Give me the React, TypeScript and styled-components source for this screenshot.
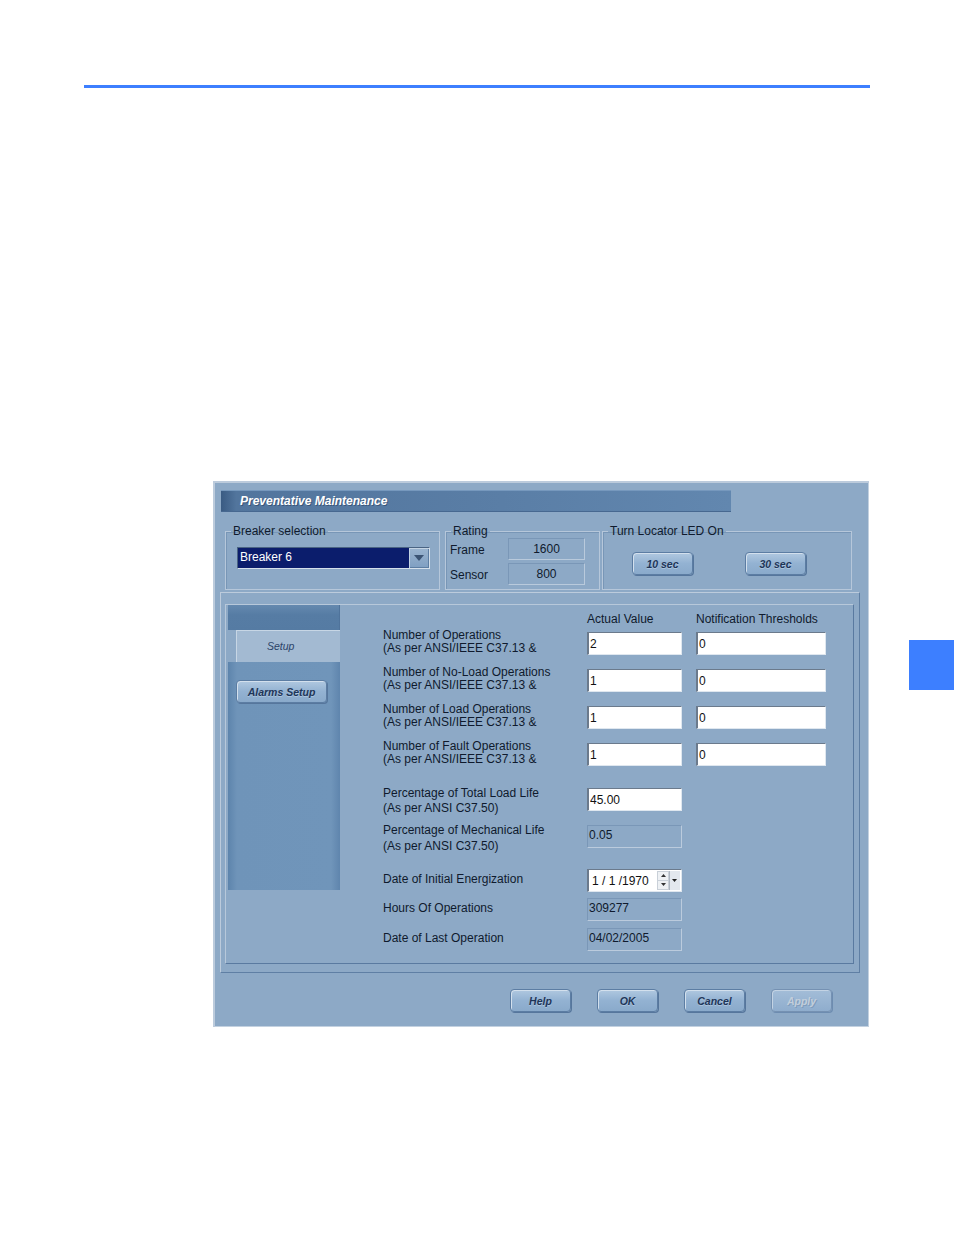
import React from 'react';
import styled, { createGlobalStyle } from 'styled-components';

const GlobalStyle = createGlobalStyle`
  html, body { margin: 0; padding: 0; background: #fff; }
  body { font-family: "Liberation Sans", Arial, sans-serif; }
`;

const Page = styled.div`
  width: 954px;
  height: 1235px;
  background: #fff;
  overflow: hidden;
`;

const Rule = styled.div`
  margin: 85px 0 0 84px;
  width: 786px;
  height: 3px;
  background: #3d7fff;
`;

const Row = styled.div`
  display: flex;
  align-items: flex-start;
  margin-top: 393px;
  padding-left: 213px;
`;

const ThumbTab = styled.div`
  margin: 159px 0 0 40px;
  width: 45px;
  height: 50px;
  background: #3d7fff;
`;

const Dialog = styled.div`
  width: 656px;
  height: 546px;
  box-sizing: border-box;
  padding: 9px 0 0 8px;
  background: #8da9c6;
  box-shadow: inset 2px 2px 0 #bccbdc, inset -1px -1px 0 #c3d1e0;
  font-size: 12px;
  color: #0f1a2d;
`;

const TitleBar = styled.div`
  width: 510px;
  height: 22px;
  box-sizing: border-box;
  padding-left: 19px;
  display: flex;
  align-items: center;
  background: linear-gradient(to right, #3a5b83 0, #52759d 3%, #5a7ea6 55%, #6287af 100%);
  box-shadow: inset 0 1px 0 #7698bd, inset 0 -1px 0 #476890;
  color: #fff;
  font-weight: bold;
  font-style: italic;
  font-size: 12px;
  text-shadow: 1px 1px 0 rgba(25, 45, 75, 0.45);
`;

const TopGroups = styled.div`
  display: flex;
  margin: 12px 0 0 4px;
`;

const Group = styled.fieldset<{ $w: number; $ml?: number }>`
  margin: 0 0 0 ${(p) => p.$ml ?? 0}px;
  width: ${(p) => p.$w}px;
  height: 66px;
  min-inline-size: 0;
  box-sizing: border-box;
  padding: 0;
  border: 1px solid #b6c7da;
  box-shadow: inset 1px 1px 0 #7896b6;
`;

const Legend = styled.legend`
  margin-left: 5px;
  padding: 0 2px;
  font-size: 12px;
  line-height: 14px;
  color: #0f1a2d;
`;

const Combo = styled.div`
  margin: 9px 0 0 11px;
  width: 193px;
  height: 22px;
  box-sizing: border-box;
  display: flex;
  border: 1px solid;
  border-color: #4a6483 #d5e0eb #d5e0eb #4a6483;
  background: #0b1d6c;
`;

const ComboText = styled.div`
  flex: 1;
  padding-left: 2px;
  line-height: 19px;
  color: #fff;
  font-size: 12px;
`;

const ComboButton = styled.div`
  width: 20px;
  display: flex;
  align-items: center;
  justify-content: center;
  background: linear-gradient(#9ab4cf, #7f9fc2);
  box-shadow: inset 1px 1px 0 #c3d3e3, inset -1px -1px 0 #5d7ea3;
`;

const RatingGrid = styled.div`
  margin-left: 4px;
  display: flex;
  flex-direction: column;
  gap: 3px;
`;

const RatingRow = styled.div`
  display: flex;
  align-items: center;
  height: 22px;
`;

const RatingLabel = styled.div`
  width: 58px;
  margin-top: 2px;
`;

const RatingValue = styled.div`
  width: 77px;
  height: 22px;
  box-sizing: border-box;
  display: flex;
  align-items: center;
  justify-content: center;
  border: 1px solid;
  border-color: #7a97b7 #b9cadc #b9cadc #7a97b7;
`;

const LedButtons = styled.div`
  display: flex;
  gap: 52px;
  margin: 14px 0 0 29px;
`;

const Btn = styled.button<{ $disabled?: boolean; $w?: number }>`
  width: ${(p) => p.$w ?? 61}px;
  height: 23px;
  box-sizing: border-box;
  padding: 0;
  border: 1px solid #5c7da3;
  border-radius: 4px;
  background: linear-gradient(#b0c8e0, #93b2d2 50%, #8aaacb);
  box-shadow: inset 1px 1px 0 #d3e0ed, 1px 1px 0 #56769c;
  font: italic bold 10.5px "Liberation Sans", Arial, sans-serif;
  color: ${(p) => (p.$disabled ? '#c2cedb' : '#1e3558')};
  text-shadow: ${(p) => (p.$disabled ? '1px 1px 0 #7f9cbc' : '0 1px 0 rgba(220,232,244,0.4)')};
  ${(p) =>
    p.$disabled
      ? 'background: linear-gradient(#a3bdd8, #8fadcd); border-color: #7591b2; box-shadow: inset 1px 1px 0 #c3d3e4, 1px 1px 0 #6d8cb0;'
      : ''}
`;

const MainOuter = styled.div`
  margin: 2px 0 0 -1px;
  width: 640px;
  height: 381px;
  box-sizing: border-box;
  padding: 11px 0 0 4px;
  border: 1px solid;
  border-color: #bccbdc #5f7fa4 #5f7fa4 #bccbdc;
`;

const MainInner = styled.div`
  width: 629px;
  height: 360px;
  box-sizing: border-box;
  padding-left: 2px;
  display: flex;
  align-items: flex-start;
  border: 1px solid;
  border-color: #b7c8da #5a7aa0 #5a7aa0 #b7c8da;
`;

const Nav = styled.div`
  width: 112px;
  height: 285px;
  display: flex;
  flex-direction: column;
`;

const NavStrip = styled.div`
  height: 25px;
  background: linear-gradient(#6589af, #567ca4 40%, #557ba3);
  box-shadow: inset -1px 0 0 #4f739b;
`;

const NavTabRow = styled.div`
  height: 32px;
  display: flex;
`;

const NavTab = styled.div`
  margin-left: 8px;
  flex: 1;
  padding-left: 31px;
  display: flex;
  align-items: center;
  background: #a3bad2;
  box-shadow: inset 1px 1px 0 #c7d6e5;
  font: italic 10.5px "Liberation Sans", Arial, sans-serif;
  color: #2b4368;
`;

const NavBody = styled.div`
  flex: 1;
  padding: 18px 0 0 8px;
  background: linear-gradient(to right, #5d84ac, #6f94b9 8%, #7095ba 92%, #5f85ad);
`;

const Form = styled.div`
  margin-left: 43px;
  padding-top: 7px;
  display: flex;
  flex-direction: column;
`;

const FormRow = styled.div<{ $mt: number; $h?: number }>`
  display: grid;
  grid-template-columns: 190px 95px 130px;
  grid-template-rows: ${(p) => p.$h ?? 23}px;
  column-gap: 14px;
  margin-top: ${(p) => p.$mt}px;
`;

const Head = styled.div`
  line-height: 14px;
  white-space: nowrap;
`;

const Label = styled.div<{ $lh?: number; $mt?: number }>`
  line-height: ${(p) => p.$lh ?? 13}px;
  margin-top: ${(p) => p.$mt ?? -3}px;
  white-space: nowrap;
`;

const SingleLabel = styled.div`
  align-self: center;
  line-height: 14px;
  margin-top: -4px;
  white-space: nowrap;
`;

const Field = styled.input`
  width: 100%;
  height: 23px;
  box-sizing: border-box;
  margin: 0;
  padding: 0 0 0 1px;
  border-style: solid;
  border-width: 1px 1px 1px 2px;
  border-color: #6b7a8c #dfe7ef #dfe7ef #6b7a8c;
  background: #fff;
  font: 12px "Liberation Sans", Arial, sans-serif;
  color: #111;
  outline: none;
`;

const ReadBox = styled.div`
  height: 23px;
  box-sizing: border-box;
  padding: 0 0 3px 1px;
  display: flex;
  align-items: center;
  border: 1px solid;
  border-color: #7a97b7 #bbcbdd #bbcbdd #7a97b7;
`;

const DateBox = styled.div`
  height: 23px;
  box-sizing: border-box;
  display: flex;
  align-items: center;
  border-style: solid;
  border-width: 1px 1px 1px 2px;
  border-color: #6b7a8c #dfe7ef #dfe7ef #6b7a8c;
  background: #fff;
`;

const DateText = styled.div`
  flex: 1;
  padding-left: 3px;
  font-size: 12px;
  color: #111;
  white-space: pre;
`;

const Spin = styled.div`
  width: 12px;
  height: 19px;
  display: flex;
  flex-direction: column;
  background: #eef1f4;
  box-shadow: inset 0 0 0 1px #c9d0d8;
`;

const SpinHalf = styled.div`
  flex: 1;
  display: flex;
  align-items: center;
  justify-content: center;
  border-bottom: 1px solid #c9d0d8;
`;

const DropBtn = styled.div`
  width: 11px;
  height: 19px;
  margin-right: 1px;
  display: flex;
  align-items: center;
  justify-content: center;
  background: #e3e8ee;
  box-shadow: inset 1px 0 0 #aeb7c2;
`;

const ButtonBar = styled.div`
  display: flex;
  justify-content: flex-end;
  gap: 26px;
  margin-top: 16px;
  padding-right: 37px;
`;

const Tri = ({ up = false, color = '#3b5474', w = 9, h = 5 }) => (
  <svg width={w} height={h} viewBox="0 0 10 6">
    <path d={up ? 'M0 6 L5 0 L10 6 Z' : 'M0 0 L10 0 L5 6 Z'} fill={color} />
  </svg>
);

const counts = [
  { title: 'Number of Operations', actual: '2' },
  { title: 'Number of No-Load Operations', actual: '1' },
  { title: 'Number of Load Operations', actual: '1' },
  { title: 'Number of Fault Operations', actual: '1' },
];

export default function App() {
  return (
    <Page>
      <GlobalStyle />
      <Rule />
      <Row>
        <Dialog>
          <TitleBar>Preventative Maintenance</TitleBar>

          <TopGroups>
            <Group $w={215}>
              <Legend>Breaker selection</Legend>
              <Combo>
                <ComboText>Breaker 6</ComboText>
                <ComboButton>
                  <Tri w={10} h={6} />
                </ComboButton>
              </Combo>
            </Group>
            <Group $w={155} $ml={5}>
              <Legend>Rating</Legend>
              <RatingGrid>
                <RatingRow>
                  <RatingLabel>Frame</RatingLabel>
                  <RatingValue>1600</RatingValue>
                </RatingRow>
                <RatingRow>
                  <RatingLabel>Sensor</RatingLabel>
                  <RatingValue>800</RatingValue>
                </RatingRow>
              </RatingGrid>
            </Group>
            <Group $w={250} $ml={2}>
              <Legend>Turn Locator LED On</Legend>
              <LedButtons>
                <Btn>10 sec</Btn>
                <Btn>30 sec</Btn>
              </LedButtons>
            </Group>
          </TopGroups>

          <MainOuter>
            <MainInner>
              <Nav>
                <NavStrip />
                <NavTabRow>
                  <NavTab>Setup</NavTab>
                </NavTabRow>
                <NavBody>
                  <Btn $w={91}>Alarms Setup</Btn>
                </NavBody>
              </Nav>

              <Form>
                <FormRow $mt={0} $h={14}>
                  <div />
                  <Head>Actual Value</Head>
                  <Head>Notification Thresholds</Head>
                </FormRow>

                {counts.map((c, i) => (
                  <FormRow key={c.title} $mt={i === 0 ? 6 : 14}>
                    <Label>
                      {c.title}
                      <br />
                      (As per ANSI/IEEE C37.13 &amp;
                    </Label>
                    <Field defaultValue={c.actual} />
                    <Field defaultValue="0" />
                  </FormRow>
                ))}

                <FormRow $mt={22}>
                  <Label $lh={15} $mt={-2}>
                    Percentage of Total Load Life
                    <br />
                    (As per ANSI C37.50)
                  </Label>
                  <Field defaultValue="45.00" />
                </FormRow>

                <FormRow $mt={14}>
                  <Label $lh={16} $mt={-3}>
                    Percentage of Mechanical Life
                    <br />
                    (As per ANSI C37.50)
                  </Label>
                  <ReadBox>0.05</ReadBox>
                </FormRow>

                <FormRow $mt={21}>
                  <SingleLabel>Date of Initial Energization</SingleLabel>
                  <DateBox>
                    <DateText>1 / 1 /1970</DateText>
                    <Spin>
                      <SpinHalf>
                        <Tri up w={5} h={3} color="#333" />
                      </SpinHalf>
                      <SpinHalf>
                        <Tri w={5} h={3} color="#333" />
                      </SpinHalf>
                    </Spin>
                    <DropBtn>
                      <Tri w={5} h={3} color="#222" />
                    </DropBtn>
                  </DateBox>
                </FormRow>

                <FormRow $mt={6}>
                  <SingleLabel>Hours Of Operations</SingleLabel>
                  <ReadBox>309277</ReadBox>
                </FormRow>

                <FormRow $mt={7}>
                  <SingleLabel>Date of Last Operation</SingleLabel>
                  <ReadBox>04/02/2005</ReadBox>
                </FormRow>
              </Form>
            </MainInner>
          </MainOuter>

          <ButtonBar>
            <Btn>Help</Btn>
            <Btn>OK</Btn>
            <Btn>Cancel</Btn>
            <Btn $disabled>Apply</Btn>
          </ButtonBar>
        </Dialog>
        <ThumbTab />
      </Row>
    </Page>
  );
}
